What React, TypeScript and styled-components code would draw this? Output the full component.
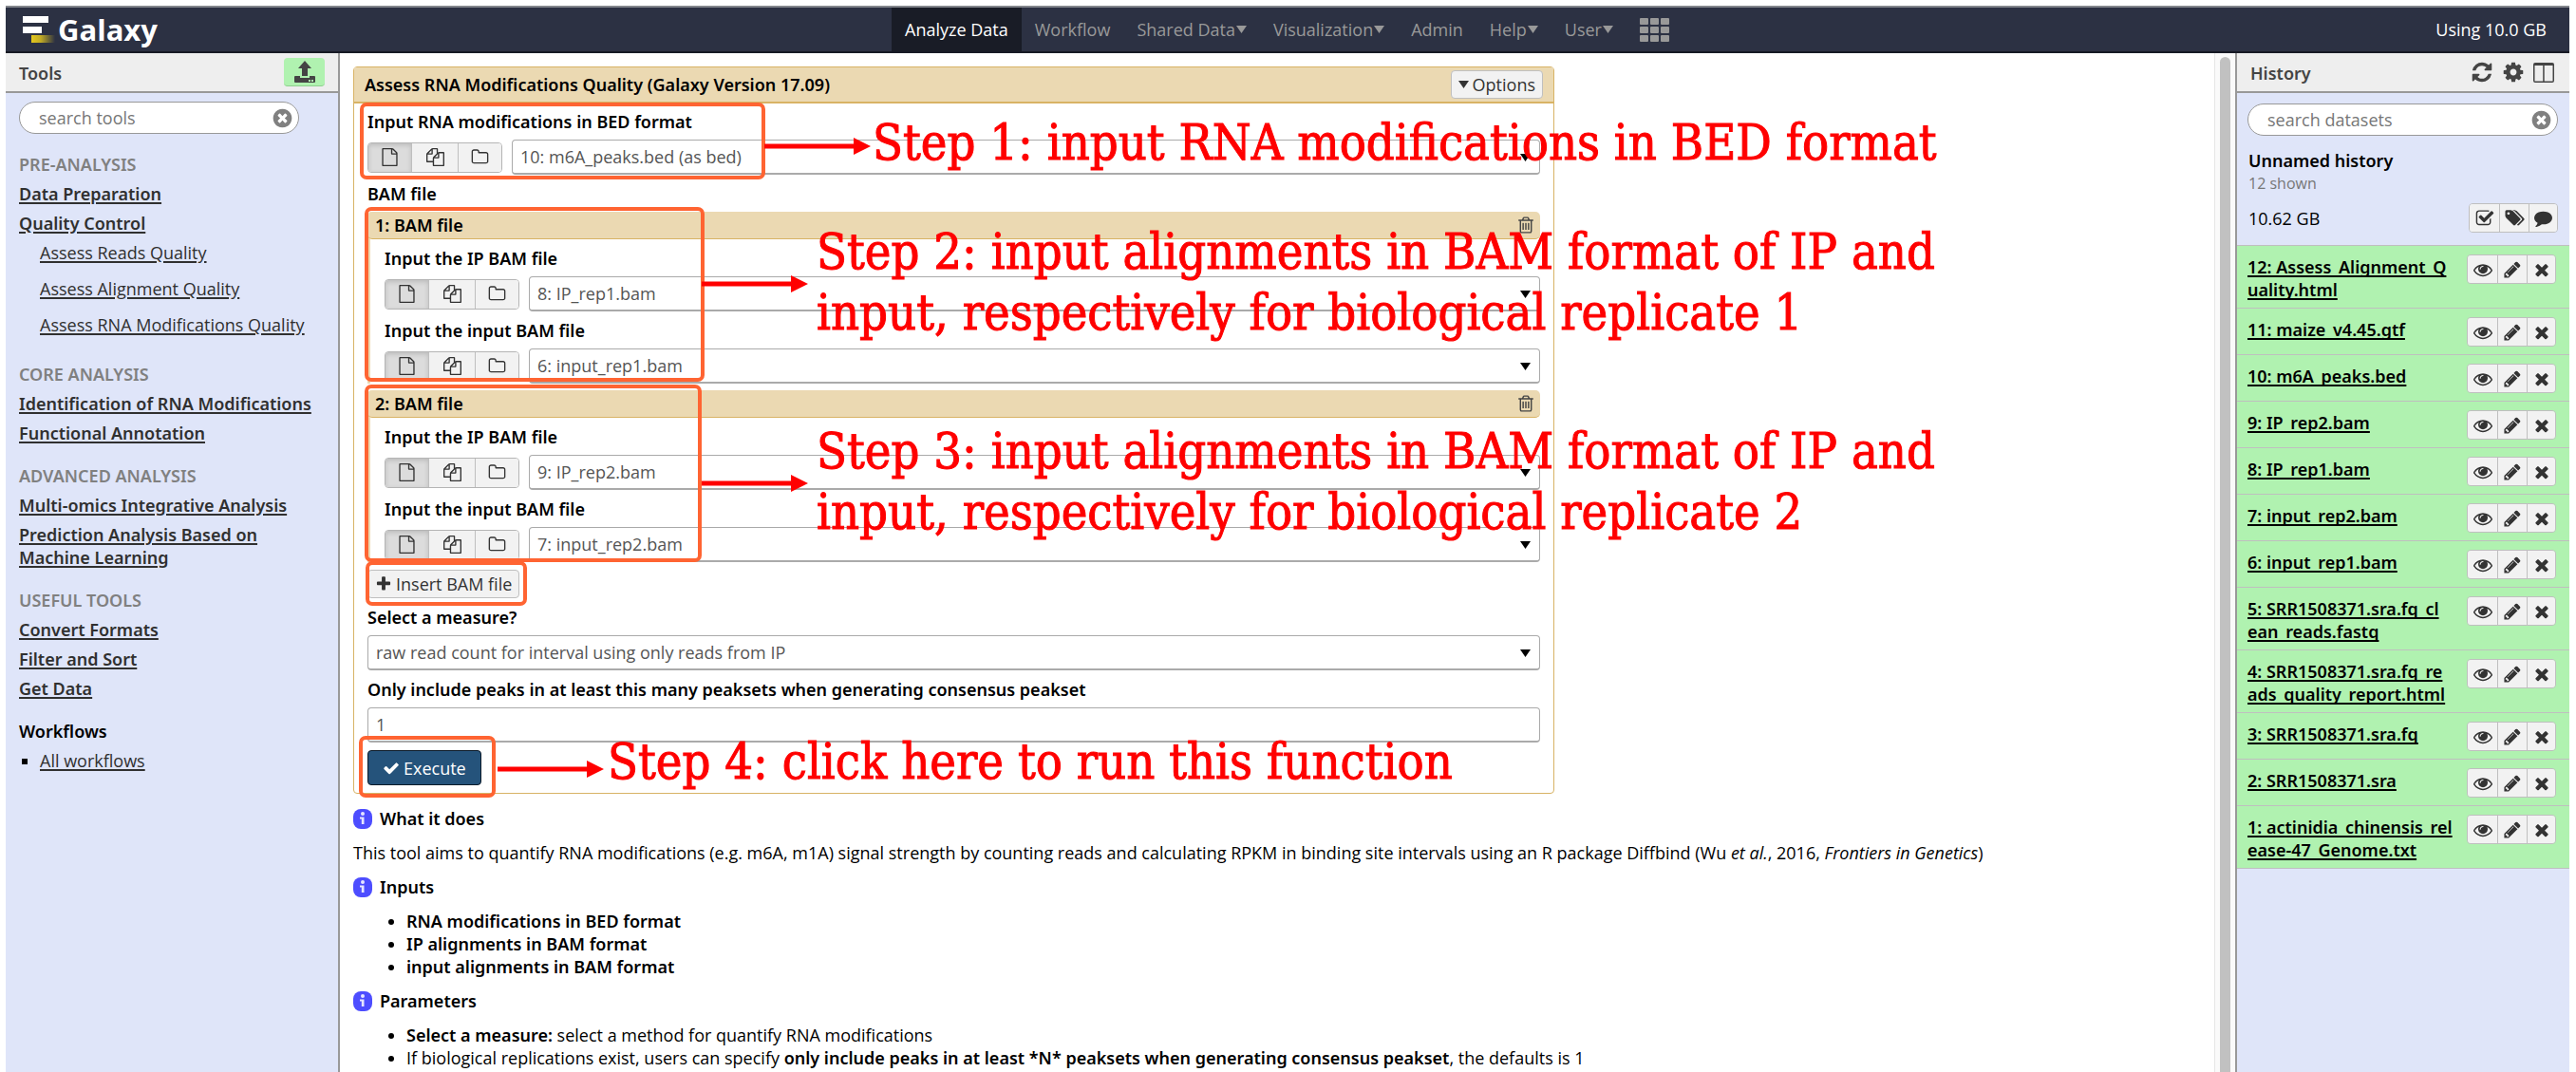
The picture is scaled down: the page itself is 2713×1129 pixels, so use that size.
import React, { Fragment } from "react";
import styled, { createGlobalStyle, css } from "styled-components";

const GlobalStyle = createGlobalStyle`
  *, *::before, *::after { box-sizing: border-box; }
  body {
    margin: 0;
    background: #fff;
    color: #000;
    font-family: "Open Sans", "Noto Sans", sans-serif;
    font-size: 18px;
    line-height: 24px;
  }
  button, input, select { font: inherit; margin: 0; }
  button { cursor: pointer; }
`;

const strong = css`
  font-family: "Noto Sans", "Open Sans", sans-serif;
  font-size: 18px;
  line-height: 24px;
  font-weight: 600;
`;

/* ---------- icons ---------- */

const glyphs = {
  file: "M1596 380q28 28 48 76t20 88v1152q0 40-28 68t-68 28h-1344q-40 0-68-28t-28-68v-1600q0-40 28-68t68-28h896q40 0 88 20t76 48zm-444-244v376h376q-10-29-22-41l-313-313q-12-12-41-22zm384 1528v-1024h-416q-40 0-68-28t-28-68v-416h-768v1536h1280z",
  files: "M1696 384q40 0 68 28t28 68v1216q0 40-28 68t-68 28h-960q-40 0-68-28t-28-68v-288h-544q-40 0-68-28t-28-68v-672q0-40 20-88t48-76l408-408q28-28 76-48t88-20h416q40 0 68 28t28 68v328q68-40 128-40h416zm-544 213l-299 299h299v-299zm-640-384l-299 299h299v-299zm196 647l316-316v-416h-384v416q0 40-28 68t-68 28h-416v640h512v-256q0-40 20-88t48-76zm956 804v-1152h-384v416q0 40-28 68t-68 28h-416v640h896z",
  folder: "M1600 1312v-704q0-40-28-68t-68-28h-704q-40 0-68-28t-28-68v-64q0-40-28-68t-68-28h-320q-40 0-68 28t-28 68v960q0 40 28 68t68 28h1216q40 0 68-28t28-68zm128-704v704q0 92-66 158t-158 66h-1216q-92 0-158-66t-66-158v-960q0-92 66-158t158-66h320q92 0 158 66t66 158v32h672q92 0 158 66t66 158z",
  trash: "M704 736v576q0 14-9 23t-23 9h-64q-14 0-23-9t-9-23v-576q0-14 9-23t23-9h64q14 0 23 9t9 23zm256 0v576q0 14-9 23t-23 9h-64q-14 0-23-9t-9-23v-576q0-14 9-23t23-9h64q14 0 23 9t9 23zm256 0v576q0 14-9 23t-23 9h-64q-14 0-23-9t-9-23v-576q0-14 9-23t23-9h64q14 0 23 9t9 23zm128 724v-948h-896v948q0 22 7 40.5t14.5 27 10.5 8.5h832q3 0 10.5-8.5t14.5-27 7-40.5zm-672-1076h448l-48-117q-7-9-17-11h-317q-10 2-17 11zm928 32v64q0 14-9 23t-23 9h-96v948q0 83-47 143.5t-113 60.5h-832q-66 0-113-58.5t-47-141.5v-952h-96q-14 0-23-9t-9-23v-64q0-14 9-23t23-9h309l70-167q15-37 54-63t79-26h320q40 0 79 26t54 63l70 167h309q14 0 23 9t9 23z",
  refresh: "M1639 1056q0 5-1 7-64 268-268 434.5t-478 166.5q-146 0-282.5-55t-243.5-157l-129 129q-19 19-45 19t-45-19-19-45v-448q0-26 19-45t45-19h448q26 0 45 19t19 45-19 45l-137 137q71 66 161 102t187 36q134 0 250-65t186-179q11-17 53-117 8-23 30-23h192q13 0 22.5 9.5t9.5 22.5zm25-800v448q0 26-19 45t-45 19h-448q-26 0-45-19t-19-45 19-45l138-138q-148-137-349-137-134 0-250 65t-186 179q-11 17-53 117-8 23-30 23h-199q-13 0-22.5-9.5t-9.5-22.5v-7q65-268 270-434.5t480-166.5q146 0 284 55.5t245 156.5l130-129q19-19 45-19t45 19 19 45z",
  cog: "M1152 896q0-106-75-181t-181-75-181 75-75 181 75 181 181 75 181-75 75-181zm512-109v222q0 12-8 23t-20 13l-185 28q-19 54-39 91 35 50 107 138 10 12 10 25t-9 23q-27 37-99 108t-94 71q-12 0-26-9l-138-108q-44 23-91 38-16 136-29 186-7 28-36 28h-222q-14 0-24.5-8.5t-11.5-21.5l-28-184q-49-16-90-37l-141 107q-10 9-25 9-14 0-25-11-126-114-165-168-7-10-7-23 0-12 8-23 15-21 51-66.5t54-70.5q-27-50-41-99l-183-27q-13-2-21-12.5t-8-23.5v-222q0-12 8-23t19-13l186-28q14-46 39-92-40-57-107-138-10-12-10-24 0-10 9-23 26-36 98.5-107.5t94.5-71.5q13 0 26 10l138 107q44-23 91-38 16-136 29-186 7-28 36-28h222q14 0 24.5 8.5t11.5 21.5l28 184q49 16 90 37l142-107q9-9 24-9 13 0 25 10 129 119 165 170 7 8 7 22 0 12-8 23-15 21-51 66.5t-54 70.5q26 50 41 98l183 28q13 2 21 12.5t8 23.5z",
  times: "M1490 1322q0 40-28 68l-136 136q-28 28-68 28t-68-28l-294-294-294 294q-28 28-68 28t-68-28l-136-136q-28-28-28-68t28-68l294-294-294-294q-28-28-28-68t28-68l136-136q28-28 68-28t68 28l294 294 294-294q28-28 68-28t68 28l136 136q28 28 28 68t-28 68l-294 294 294 294q28 28 28 68z",
  pencil: "M491 1536l91-91-235-235-91 91v107h128v128h107zm523-928q0-22-22-22-10 0-17 7l-542 542q-7 7-7 17 0 22 22 22 10 0 17-7l542-542q7-7 7-17zm-54-192l416 416-832 832h-416v-416zm683 96q0 53-37 90l-166 166-416-416 166-165q36-38 90-38 53 0 91 38l235 234q37 39 37 91z",
  eye: "M1664 960q-152-236-381-353 61 104 61 225 0 185-131.5 316.5t-316.5 131.5-316.5-131.5-131.5-316.5q0-121 61-225-229 117-381 353 133 205 333.5 326.5t434.5 121.5 434.5-121.5 333.5-326.5zm-720-384q0-20-14-34t-34-14q-125 0-214.5 89.5t-89.5 214.5q0 20 14 34t34 14 34-14 14-34q0-86 61-147t147-61q20 0 34-14t14-34zm848 384q0 34-20 69-140 230-376.5 368.5t-499.5 138.5-499.5-139-376.5-368q-20-35-20-69t20-69q140-229 376.5-368t499.5-139 499.5 139 376.5 368q20 35 20 69z",
  tags: "M576 448q0-53-37.5-90.5t-90.5-37.5-90.5 37.5-37.5 90.5 37.5 90.5 90.5 37.5 90.5-37.5 37.5-90.5zm1067 576q0 53-37 90l-491 492q-39 37-91 37-53 0-90-37l-715-716q-38-37-64.5-101t-26.5-117v-416q0-52 38-90t90-38h416q53 0 117 26.5t102 64.5l715 714q37 39 37 91zm384 0q0 53-37 90l-491 492q-39 37-91 37-36 0-59-14t-53-45l470-470q37-37 37-90 0-52-37-91l-715-714q-38-38-102-64.5t-117-26.5h224q53 0 117 26.5t102 64.5l715 714q37 39 37 91z",
  comment: "M1792 896q0 174-120 321.5t-326 233-450 85.5q-70 0-145-8-198 175-460 242-49 14-114 22-17 2-30.5-9t-17.5-29v-1q-3-4-.5-12t2-10 4.5-9.5l6-9 7-8.5 8-9q7-8 31-34.5t34.5-38 31-39.5 32.5-51 27-59 26-76q-157-89-247.5-220t-90.5-281q0-174 120-321.5t326-233 450-85.5 450 85.5 326 233 120 321.5z",
  checkSquare: "M1472 930v318q0 119-84.5 203.5t-203.5 84.5h-832q-119 0-203.5-84.5t-84.5-203.5v-832q0-119 84.5-203.5t203.5-84.5h832q63 0 117 25 15 7 18 23 3 17-9 29l-49 49q-10 10-23 10-3 0-9-2-23-6-45-6h-832q-66 0-113 47t-47 113v832q0 66 47 113t113 47h832q66 0 113-47t47-113v-254q0-13 9-22l64-64q10-10 23-10 6 0 12 3 20 8 20 29zm231-489l-814 814q-24 24-57 24t-57-24l-430-430q-24-24-24-57t24-57l110-110q24-24 57-24t57 24l263 263 647-647q24-24 57-24t57 24l110 110q24 24 24 57t-24 57z",
  timesCircle: "M1277 1122q0-26-19-45l-181-181 181-181q19-19 19-45 0-27-19-46l-90-90q-19-19-46-19-26 0-45 19l-181 181-181-181q-19-19-45-19-27 0-46 19l-90 90q-19 19-19 46 0 26 19 45l181 181-181 181q-19 19-19 45 0 27 19 46l90 90q19 19 46 19 26 0 45-19l181-181 181 181q19 19 45 19 27 0 46-19l90-90q19-19 19-46zm387-226q0 209-103 385.5t-279.5 279.5-385.5 103-385.5-103-279.5-279.5-103-385.5 103-385.5 279.5-279.5 385.5-103 385.5 103 279.5 279.5 103 385.5z",
  plus: "M1600 736v192q0 40-28 68t-68 28h-416v416q0 40-28 68t-68 28h-192q-40 0-68-28t-28-68v-416h-416q-40 0-68-28t-28-68v-192q0-40 28-68t68-28h416v-416q0-40 28-68t68-28h192q40 0 68 28t28 68v416h416q40 0 68 28t28 68z",
  check: "M1671 566q0 40-28 68l-724 724-136 136q-28 28-68 28t-68-28l-136-136-362-362q-28-28-28-68t28-68l136-136q28-28 68-28t68 28l294 295 656-657q28-28 68-28t68 28l136 136q28 28 28 68z",
};

const Glyph = styled.svg`
  display: block;
  flex: none;
  fill: currentColor;
`;

function Icon({ name, size = 20 }: { name: keyof typeof glyphs; size?: number }) {
  const wide = name === "tags";
  return (
    <Glyph
      width={wide ? Math.round((size * 8) / 7) : size}
      height={size}
      viewBox={wide ? "0 0 2048 1792" : "0 0 1792 1792"}
      aria-hidden="true"
    >
      <path d={glyphs[name]} />
    </Glyph>
  );
}

const Caret = () => (
  <Glyph width="11" height="8" viewBox="0 0 11 8" aria-hidden="true">
    <path d="M0 0h11L5.500 8z" />
  </Glyph>
);

const UploadIcon = () => (
  <Glyph width="24" height="24" viewBox="0 0 24 24" aria-hidden="true">
    <path d="M12 0l7 8h-4v8H9V8H5z" />
    <path fillRule="evenodd" d="M2 16h5v2h10v-2h5q1 0 1 1v5q0 1-1 1H2q-1 0-1-1v-5q0-1 1-1zm14 4v2h2v-2zm3 0v2h2v-2z" />
  </Glyph>
);

const ColumnsIcon = () => (
  <Glyph width="22" height="21" viewBox="0 0 22 21" aria-hidden="true">
    <path fillRule="evenodd" d="M2 0h18q2 0 2 2v17q0 2-2 2H2q-2 0-2-2V2q0-2 2-2zM1.500 3v16q0 .5.5.5h8.200V3zm10.200 0v16.500H20q.5 0 .5-.5V3z" />
  </Glyph>
);

const GridIcon = () => (
  <Glyph width="32" height="25" viewBox="0 0 32 25" aria-hidden="true">
    {[0, 9, 18].map((y) => [0, 11, 22].map((x) => <rect key={`${x}-${y}`} x={x} y={y} width="9" height="7" rx="1" />))}
  </Glyph>
);

const LogoMark = () => (
  <Glyph width="34" height="28" viewBox="0 0 34 28" aria-hidden="true">
    <defs>
      <linearGradient id="tail" x1="0" x2="1">
        <stop offset="0" stopColor="#e3c71c" />
        <stop offset=".4" stopColor="#c2ab25" />
        <stop offset="1" stopColor="#2c3143" />
      </linearGradient>
    </defs>
    <path fill="#fff" d="M0 0h27v7H0zM0 11h20v7H0z" />
    <path fill="url(#tail)" d="M9 20h25v8H9z" />
  </Glyph>
);

const InfoIcon = () => (
  <Glyph width="20" height="21" viewBox="0 0 20 21" aria-hidden="true">
    <rect width="20" height="21" rx="8" fill="#4d4dff" />
    <circle cx="10" cy="5" r="2" fill="#e6e6ff" />
    <path fill="#e6e6ff" d="M7 8.500h4.500V16H8.800v-5.500H7z" />
  </Glyph>
);

/* ---------- page frame ---------- */

const Page = styled.div`
  min-height: 100vh;
  display: flex;
  flex-direction: column;
  padding: 6px 7px 0 6px;
`;

const Masthead = styled.header`
  display: grid;
  grid-template-columns: 1fr auto 1fr;
  align-items: stretch;
  height: 50px;
  background: #2c3143;
  border-top: 2px solid #83868c;
  border-bottom: 2px solid #171a25;
`;

const Brand = styled.a`
  display: flex;
  align-items: center;
  gap: 3px;
  padding-left: 18px;
  color: #fff;
  font-size: 31px;
  font-weight: 700;
  text-decoration: none;
`;

const Nav = styled.nav`
  display: flex;
`;

const NavLink = styled.a<{ $active?: boolean }>`
  display: flex;
  align-items: center;
  gap: 1px;
  padding: 0 14px;
  color: #999;
  text-decoration: none;
  ${(p) => p.$active && css`
    background: #191c26;
    color: #fff;
    font-weight: 500;
  `}
`;

const Quota = styled.span`
  align-self: center;
  justify-self: end;
  padding-right: 24px;
  color: #fff;
`;

const Columns = styled.div`
  flex: 1;
  display: flex;
`;

const SidePanel = styled.aside<{ $edge: "left" | "right" }>`
  flex: none;
  width: 352px;
  background: #dfe5f9;
  border: 0 solid #999;
  ${(p) => (p.$edge === "right" ? css`border-right-width: 2px;` : css`border-left-width: 2px;`)}
`;

const PanelHeader = styled.div`
  display: flex;
  align-items: center;
  justify-content: space-between;
  height: 42px;
  padding: 0 14px;
  background: #eee;
  border-bottom: 2px solid #999;
`;

const PanelTitle = styled.h2`
  ${strong}
  margin: 0;
  padding-top: 2px;
  color: #444;
`;

const HeaderIcons = styled.div`
  display: flex;
  align-items: center;
  gap: 9px;
  padding-right: 2px;
`;

const PlainButton = styled.button`
  display: flex;
  padding: 0;
  border: 0;
  background: none;
  color: #444;
`;

const UploadButton = styled(PlainButton)`
  justify-content: center;
  align-items: center;
  width: 43px;
  height: 30px;
  border-radius: 4px;
  border-bottom: 1px solid #8fd08f;
  background: #b0f2b0;
`;

const SearchBox = styled.div<{ $m: string }>`
  display: flex;
  align-items: center;
  height: 34px;
  margin: ${(p) => p.$m};
  padding: 0 5px 0 20px;
  background: #fff;
  border: 1px solid #999;
  border-radius: 17px;
  color: #808080;
`;

const SearchInput = styled.input`
  flex: 1;
  min-width: 0;
  padding: 0;
  border: 0;
  outline: 0;
  background: none;
  &::placeholder { color: #777; opacity: 1; }
`;

/* ---------- tool list ---------- */

const ToolSections = styled.nav`
  display: flex;
  flex-direction: column;
  gap: 14px;
  padding: 20px 24px 0 14px;
`;

const SectionTitle = styled.h3<{ $dark?: boolean }>`
  ${strong}
  margin: 0 0 7px;
  color: ${(p) => (p.$dark ? "#000" : "#808080")};
`;

const underline = css`
  text-decoration: underline;
  text-decoration-thickness: 2px;
  text-underline-offset: 2px;
`;

const ToolLink = styled.a`
  ${strong}
  ${underline}
  display: block;
  margin-bottom: 7px;
  color: #303030;
`;

const SubToolLink = styled.a`
  ${underline}
  display: block;
  margin: 0 0 14px 22px;
  color: #303030;
  white-space: nowrap;
`;

const WorkflowList = styled.ul`
  margin: 0;
  padding: 0 0 0 22px;
  list-style: square;
`;

const WorkflowLink = styled.a`
  ${underline}
  color: #303030;
`;

/* ---------- tool form ---------- */

const Main = styled.main`
  flex: 1;
  min-width: 0;
  padding: 14px 14px 0;
`;

const Form = styled.form`
  position: relative;
  max-width: 1265px;
  border: 1px solid #d8b365;
  border-radius: 4px;
`;

const FormHeader = styled.div`
  display: flex;
  align-items: center;
  justify-content: space-between;
  height: 38px;
  padding: 0 11px;
  background: #ebd9b2;
  border-bottom: 2px solid #d8b365;
`;

const FormTitle = styled.h1`
  ${strong}
  margin: 0;
`;

const Button = styled.button<{ $primary?: boolean }>`
  display: flex;
  align-items: center;
  gap: 4px;
  height: ${(p) => (p.$primary ? 37 : 30)}px;
  padding: 0 ${(p) => (p.$primary ? 15 : 7)}px;
  border: 1px solid ${(p) => (p.$primary ? "#0c1a28" : "#bfbfbf")};
  border-radius: 4px;
  background: ${(p) => (p.$primary ? "#25537b" : "#f2f2f2")};
  color: ${(p) => (p.$primary ? "#fff" : "#333")};
`;

const FormBody = styled.div`
  display: flex;
  flex-direction: column;
  align-items: stretch;
  gap: 8px;
  padding: 7px 14px 8px;
`;

const Label = styled.label`
  ${strong}
  display: block;
  margin-bottom: 7px;
`;

const GroupLabel = styled.div`
  ${strong}
`;

const ControlRow = styled.div`
  display: flex;
  align-items: center;
  gap: 10px;
`;

const Segments = styled.div`
  display: flex;
  overflow: hidden;
  height: 32px;
  border: 1px solid #b5b5b5;
  border-radius: 4px;
`;

const Segment = styled.button<{ $on?: boolean; $w: number }>`
  display: flex;
  align-items: center;
  justify-content: center;
  width: ${(p) => p.$w}px;
  padding: 0;
  border: 0;
  border-left: 1px solid #bfbfbf;
  background: #f2f2f2;
  color: #333;
  &:first-child { border-left: 0; }
  ${(p) => p.$on && css`
    background: #dcdcdc;
    box-shadow: inset 0 2px 5px rgba(0, 0, 0, 0.15);
  `}
`;

const SelectWrap = styled.div`
  flex: 1;
  display: grid;
  align-items: center;
  & > * { grid-area: 1 / 1; }
  & > svg { justify-self: end; margin-right: 10px; pointer-events: none; }
`;

const field = css`
  width: 100%;
  height: 37px;
  padding: 0 8px;
  border: 1px solid #aaa;
  border-bottom: 2px solid #aaa;
  border-radius: 4px;
  background: #fff;
  color: #555;
`;

const Select = styled.select`
  ${field}
  appearance: none;
`;

const TextInput = styled.input`
  ${field}
`;

const Repeat = styled.section`
  border-left: 3px solid #ebd9b2;
  border-radius: 5px 5px 0 0;
  margin-top: -1px;
`;

const RepeatHeader = styled.div`
  ${strong}
  display: flex;
  align-items: center;
  justify-content: space-between;
  height: 29px;
  margin-left: -3px;
  padding: 0 5px 0 8px;
  background: #ebd9b2;
  border-bottom: 1px solid #d8b365;
  border-radius: 5px;
`;

const RepeatBody = styled.div`
  display: flex;
  flex-direction: column;
  gap: 8px;
  padding: 8px 0 0 15px;
`;

const Start = styled.div`
  display: flex;
`;

/* ---------- walkthrough notes ---------- */

const Frame = styled.div<{ $x: number; $y: number; $w: number; $h: number }>`
  position: absolute;
  left: ${(p) => p.$x}px;
  top: ${(p) => p.$y}px;
  width: ${(p) => p.$w}px;
  height: ${(p) => p.$h}px;
  border: 4px solid #ff6432;
  border-radius: 7px;
  pointer-events: none;
`;

const ArrowSvg = styled.svg<{ $x: number; $y: number }>`
  position: absolute;
  left: ${(p) => p.$x}px;
  top: ${(p) => p.$y}px;
  fill: #f00;
`;

const Arrow = ({ x, y }: { x: number; y: number }) => (
  <ArrowSvg $x={x} $y={y} width="112" height="18" viewBox="0 0 112 18" aria-hidden="true">
    <path d="M0 6.500h94V0l18 9-18 9v-6.500H0z" />
  </ArrowSvg>
);

const Note = styled.p<{ $x: number; $y: number }>`
  position: absolute;
  left: ${(p) => p.$x}px;
  top: ${(p) => p.$y}px;
  margin: 0;
  color: #f00;
  font-family: "DejaVu Serif Condensed", "DejaVu Serif", serif;
  font-size: 52px;
  line-height: 64px;
  -webkit-text-stroke: 1px #f00;
  white-space: nowrap;
  pointer-events: none;
`;

/* ---------- help text ---------- */

const Help = styled.section`
  display: flex;
  flex-direction: column;
  gap: 12px;
  padding-top: 14px;
`;

const HelpHeading = styled.h2`
  ${strong}
  display: flex;
  align-items: center;
  gap: 8px;
  margin: 0;
`;

const HelpText = styled.p`
  margin: 0;
`;

const HelpList = styled.ul`
  margin: 0;
  padding-left: 56px;
`;

const Strong = styled.b`
  ${strong}
`;

const ScrollTrack = styled.div`
  flex: none;
  display: flex;
  width: 22px;
  padding: 4px 5px 0;
  background: #fafafa;
  border-left: 1px solid #e6e6e6;
`;

const ScrollThumb = styled.div`
  flex: 1;
  background: #c1c1c1;
  border-radius: 6px 6px 0 0;
`;

/* ---------- history ---------- */

const HistoryInfo = styled.div`
  padding: 14px 12px 13px;
`;

const HistoryName = styled.h3`
  ${strong}
  margin: 0;
`;

const Shown = styled.div`
  font-size: 16px;
  color: #777;
`;

const SizeRow = styled.div`
  display: flex;
  align-items: center;
  justify-content: space-between;
  margin-top: 9px;
`;

const IconGroup = styled.div`
  flex: none;
  display: flex;
  height: 31px;
  border: 1px solid #bfbfbf;
  border-radius: 4px;
  overflow: hidden;
`;

const DatasetList = styled.ul`
  margin: 0;
  padding: 0;
  list-style: none;
  border-bottom: 1px solid #bfbfbf;
`;

const Dataset = styled.li`
  display: flex;
  justify-content: space-between;
  align-items: flex-start;
  min-height: 49px;
  padding: 9px 14px 7px 11px;
  background: #b0f2b0;
  border-top: 1px solid #bfbfbf;
`;

const DatasetLink = styled.a`
  ${strong}
  ${underline}
  padding-top: 1px;
  color: #000;
  text-decoration-skip-ink: none;
`;

/* ---------- content ---------- */

const sections = [
  {
    title: "PRE-ANALYSIS",
    tools: ["Data Preparation", "Quality Control"],
    subs: ["Assess Reads Quality", "Assess Alignment Quality", "Assess RNA Modifications Quality"],
  },
  { title: "CORE ANALYSIS", tools: ["Identification of RNA Modifications", "Functional Annotation"] },
  {
    title: "ADVANCED ANALYSIS",
    tools: ["Multi-omics Integrative Analysis", "Prediction Analysis Based on Machine Learning"],
  },
  { title: "USEFUL TOOLS", tools: ["Convert Formats", "Filter and Sort", "Get Data"] },
];

const navItems = [
  { text: "Workflow" },
  { text: "Shared Data", menu: true },
  { text: "Visualization", menu: true },
  { text: "Admin" },
  { text: "Help", menu: true },
  { text: "User", menu: true },
];

const datasets = [
  ["12: Assess_Alignment_Q", "uality.html"],
  ["11: maize_v4.45.gtf"],
  ["10: m6A_peaks.bed"],
  ["9: IP_rep2.bam"],
  ["8: IP_rep1.bam"],
  ["7: input_rep2.bam"],
  ["6: input_rep1.bam"],
  ["5: SRR1508371.sra.fq_cl", "ean_reads.fastq"],
  ["4: SRR1508371.sra.fq_re", "ads_quality_report.html"],
  ["3: SRR1508371.sra.fq"],
  ["2: SRR1508371.sra"],
  ["1: actinidia_chinensis_rel", "ease-47_Genome.txt"],
];

const repeats = [
  { ip: "8: IP_rep1.bam", input: "6: input_rep1.bam" },
  { ip: "9: IP_rep2.bam", input: "7: input_rep2.bam" },
];

function DataField({ id, label, value }: { id: string; label: string; value: string }) {
  return (
    <div>
      <Label htmlFor={id}>{label}</Label>
      <ControlRow>
        <Segments>
          <Segment type="button" $w={45} $on aria-label="Single dataset"><Icon name="file" size={19} /></Segment>
          <Segment type="button" $w={49} aria-label="Multiple datasets"><Icon name="files" size={19} /></Segment>
          <Segment type="button" $w={46} aria-label="Dataset collection"><Icon name="folder" size={19} /></Segment>
        </Segments>
        <SelectWrap>
          <Select id={id}><option>{value}</option></Select>
          <Caret />
        </SelectWrap>
      </ControlRow>
    </div>
  );
}

export default function App() {
  return (
    <Page>
      <GlobalStyle />
      <Masthead>
        <Brand href="#"><LogoMark />Galaxy</Brand>
        <Nav>
          <NavLink href="#" $active>Analyze Data</NavLink>
          {navItems.map((n) => (
            <NavLink href="#" key={n.text}>{n.text}{n.menu && <Caret />}</NavLink>
          ))}
          <NavLink href="#" aria-label="Applications"><GridIcon /></NavLink>
        </Nav>
        <Quota>Using 10.0 GB</Quota>
      </Masthead>

      <Columns>
        <SidePanel $edge="right">
          <PanelHeader>
            <PanelTitle>Tools</PanelTitle>
            <UploadButton type="button" aria-label="Upload data"><UploadIcon /></UploadButton>
          </PanelHeader>
          <SearchBox $m="9px 41px 0 14px">
            <SearchInput type="text" placeholder="search tools" aria-label="search tools" />
            <Icon name="timesCircle" size={23} />
          </SearchBox>
          <ToolSections>
            {sections.map((s) => (
              <div key={s.title}>
                <SectionTitle>{s.title}</SectionTitle>
                {s.tools.map((t) => <ToolLink href="#" key={t}>{t}</ToolLink>)}
                {s.subs?.map((t) => <SubToolLink href="#" key={t}>{t}</SubToolLink>)}
              </div>
            ))}
            <div>
              <SectionTitle $dark>Workflows</SectionTitle>
              <WorkflowList>
                <li><WorkflowLink href="#">All workflows</WorkflowLink></li>
              </WorkflowList>
            </div>
          </ToolSections>
        </SidePanel>

        <Main>
          <Form onSubmit={(e) => e.preventDefault()}>
            <FormHeader>
              <FormTitle>Assess RNA Modifications Quality (Galaxy Version 17.09)</FormTitle>
              <Button type="button"><Caret />Options</Button>
            </FormHeader>
            <FormBody>
              <DataField id="bed" label="Input RNA modifications in BED format" value="10: m6A_peaks.bed (as bed)" />
              <GroupLabel>BAM file</GroupLabel>
              {repeats.map((r, i) => (
                <Repeat key={r.ip}>
                  <RepeatHeader>
                    {i + 1}: BAM file
                    <PlainButton type="button" aria-label="Delete"><Icon name="trash" size={20} /></PlainButton>
                  </RepeatHeader>
                  <RepeatBody>
                    <DataField id={`ip${i}`} label="Input the IP BAM file" value={r.ip} />
                    <DataField id={`input${i}`} label="Input the input BAM file" value={r.input} />
                  </RepeatBody>
                </Repeat>
              ))}
              <Start><Button type="button"><Icon name="plus" size={18} />Insert BAM file</Button></Start>
              <div>
                <Label htmlFor="measure">Select a measure?</Label>
                <SelectWrap>
                  <Select id="measure"><option>raw read count for interval using only reads from IP</option></Select>
                  <Caret />
                </SelectWrap>
              </div>
              <div>
                <Label htmlFor="peaks">Only include peaks in at least this many peaksets when generating consensus peakset</Label>
                <TextInput id="peaks" type="text" defaultValue="1" />
              </div>
              <Start><Button type="submit" $primary><Icon name="check" size={18} />Execute</Button></Start>
            </FormBody>

            <Frame $x={6} $y={37} $w={427} $h={81} />
            <Frame $x={11} $y={147} $w={358} $h={184} />
            <Frame $x={11} $y={334} $w={355} $h={187} />
            <Frame $x={12} $y={520} $w={170} $h={47} />
            <Frame $x={5} $y={704} $w={144} $h={65} />
            <Arrow x={432} y={74} />
            <Arrow x={366} y={219} />
            <Arrow x={366} y={429} />
            <Arrow x={151} y={730} />
            <Note $x={546} $y={47}>Step 1: input RNA modifications in BED format</Note>
            <Note $x={487} $y={162}>Step 2: input alignments in BAM format of IP and<br />input, respectively for biological replicate 1</Note>
            <Note $x={487} $y={372}>Step 3: input alignments in BAM format of IP and<br />input, respectively for biological replicate 2</Note>
            <Note $x={267} $y={699}>Step 4: click here to run this function</Note>
          </Form>

          <Help>
            <HelpHeading><InfoIcon />What it does</HelpHeading>
            <HelpText>
              This tool aims to quantify RNA modifications (e.g. m6A, m1A) signal strength by counting reads and calculating RPKM in
              binding site intervals using an R package Diffbind (Wu <i>et al.</i>, 2016, <i>Frontiers in Genetics</i>)
            </HelpText>
            <HelpHeading><InfoIcon />Inputs</HelpHeading>
            <HelpList>
              <li><Strong>RNA modifications in BED format</Strong></li>
              <li><Strong>IP alignments in BAM format</Strong></li>
              <li><Strong>input alignments in BAM format</Strong></li>
            </HelpList>
            <HelpHeading><InfoIcon />Parameters</HelpHeading>
            <HelpList>
              <li><Strong>Select a measure:</Strong> select a method for quantify RNA modifications</li>
              <li>If biological replications exist, users can specify <Strong>only include peaks in at least *N* peaksets when generating consensus peakset</Strong>, the defaults is 1</li>
            </HelpList>
          </Help>
        </Main>

        <ScrollTrack><ScrollThumb /></ScrollTrack>

        <SidePanel $edge="left">
          <PanelHeader>
            <PanelTitle>History</PanelTitle>
            <HeaderIcons>
              <PlainButton type="button" aria-label="Refresh"><Icon name="refresh" size={24} /></PlainButton>
              <PlainButton type="button" aria-label="History options"><Icon name="cog" size={24} /></PlainButton>
              <PlainButton type="button" aria-label="View all histories"><ColumnsIcon /></PlainButton>
            </HeaderIcons>
          </PanelHeader>
          <SearchBox $m="11px 12px 0 11px">
            <SearchInput type="text" placeholder="search datasets" aria-label="search datasets" />
            <Icon name="timesCircle" size={23} />
          </SearchBox>
          <HistoryInfo>
            <HistoryName>Unnamed history</HistoryName>
            <Shown>12 shown</Shown>
            <SizeRow>
              10.62 GB
              <IconGroup>
                <Segment type="button" $w={31} aria-label="Select datasets"><Icon name="checkSquare" /></Segment>
                <Segment type="button" $w={31} aria-label="Edit tags"><Icon name="tags" size={19} /></Segment>
                <Segment type="button" $w={30} aria-label="Edit annotation"><Icon name="comment" size={19} /></Segment>
              </IconGroup>
            </SizeRow>
          </HistoryInfo>
          <DatasetList>
            {datasets.map((lines) => (
              <Dataset key={lines[0]}>
                <DatasetLink href="#">
                  {lines.map((line, i) => (
                    <Fragment key={line}>{i > 0 && <br />}{line}</Fragment>
                  ))}
                </DatasetLink>
                <IconGroup>
                  <Segment type="button" $w={31} aria-label="View data"><Icon name="eye" /></Segment>
                  <Segment type="button" $w={31} aria-label="Edit attributes"><Icon name="pencil" /></Segment>
                  <Segment type="button" $w={30} aria-label="Delete"><Icon name="times" /></Segment>
                </IconGroup>
              </Dataset>
            ))}
          </DatasetList>
        </SidePanel>
      </Columns>
    </Page>
  );
}
